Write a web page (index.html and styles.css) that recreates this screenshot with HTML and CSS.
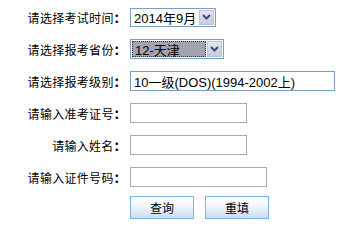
FILE: index.html
```html
<!DOCTYPE html>
<html lang="zh-CN">

<head>
  <meta charset="UTF-8">
  <title>成绩查询</title>
  <link rel="stylesheet" href="styles.css">
</head>

<body>
  <form class="query">
    <label class="lbl">请选择考试时间<b>：</b></label>
    <div class="sel sel-time">
      <span class="val">2014年9月</span>
      <span class="arrow"><svg width="9" height="6" viewBox="0 0 9 6"><path d="M1 1 L4.5 4.5 L8 1" fill="none" stroke="#3f4f70" stroke-width="2"/></svg></span>
    </div>

    <label class="lbl">请选择报考省份<b>：</b></label>
    <div class="sel sel-prov">
      <span class="val focus">12-天津</span>
      <span class="arrow"><svg width="9" height="6" viewBox="0 0 9 6"><path d="M1 1 L4.5 4.5 L8 1" fill="none" stroke="#3f4f70" stroke-width="2"/></svg></span>
    </div>

    <label class="lbl">请选择报考级别<b>：</b></label>
    <div class="sel sel-level">
      <span class="val">10一级(DOS)(1994-2002上)</span>
    </div>

    <label class="lbl">请输入准考证号<b>：</b></label>
    <input type="text" class="txt">

    <label class="lbl">请输入姓名<b>：</b></label>
    <input type="text" class="txt">

    <label class="lbl">请输入证件号码<b>：</b></label>
    <input type="text" class="txt txt-long">

    <span></span>
    <div class="btns">
      <button type="button" class="btn">查询</button>
      <button type="reset" class="btn">重填</button>
    </div>
  </form>
</body>

</html>
```

FILE: styles.css
```css
* {
  padding: 0;
  margin: 0;
  box-sizing: border-box;
}

body {
  background: #fff;
  font-family: "Noto Sans CJK SC", "DejaVu Sans", sans-serif;
  font-size: 12px;
  color: #000;
}

.query {
  display: grid;
  grid-template-columns: 126px auto;
  grid-auto-rows: 32px;
  column-gap: 4px;
  align-items: center;
  justify-items: start;
  padding-top: 1px;
}

.lbl {
  justify-self: end;
  white-space: nowrap;
  letter-spacing: 0.3px;
}

.lbl b {
  font-weight: 900;
}

.sel {
  display: flex;
  align-items: center;
  height: 20px;
  border: 1px solid #7f9db9;
  background: #fff;
  padding: 1px;
}

.sel .val {
  flex: 1;
  height: 100%;
  display: flex;
  align-items: center;
  padding-left: 2px;
  white-space: nowrap;
  font-family: "Liberation Sans", "Noto Sans CJK SC", sans-serif;
  font-size: 13px;
}

.sel .val.focus {
  background: #a2a3b3;
  border: 1px dotted #333;
}

.sel .arrow {
  width: 15px;
  height: 100%;
  display: flex;
  align-items: center;
  justify-content: center;
  background: linear-gradient(#e2e6f3, #c5cde2);
  border: 1px solid #b7c3dc;
  margin-left: 1px;
}

.sel-time {
  width: 86px;
  height: 19px;
}

.sel-prov {
  width: 94px;
}

.sel-level {
  width: 205px;
}

.txt {
  width: 117px;
  height: 20px;
  border: 1px solid #a5acb2;
  background: #fff;
}

.txt-long {
  width: 137px;
}

.btns {
  display: flex;
  gap: 11px;
  align-self: start;
  margin-top: 3px;
}

.btn {
  width: 64px;
  height: 23px;
  border: 1px solid #7eb1ea;
  background: linear-gradient(#ffffff, #f2f7fd 40%, #c8ddf3);
  font-family: "Noto Sans CJK SC", sans-serif;
  font-size: 12px;
  color: #000;
}
```
